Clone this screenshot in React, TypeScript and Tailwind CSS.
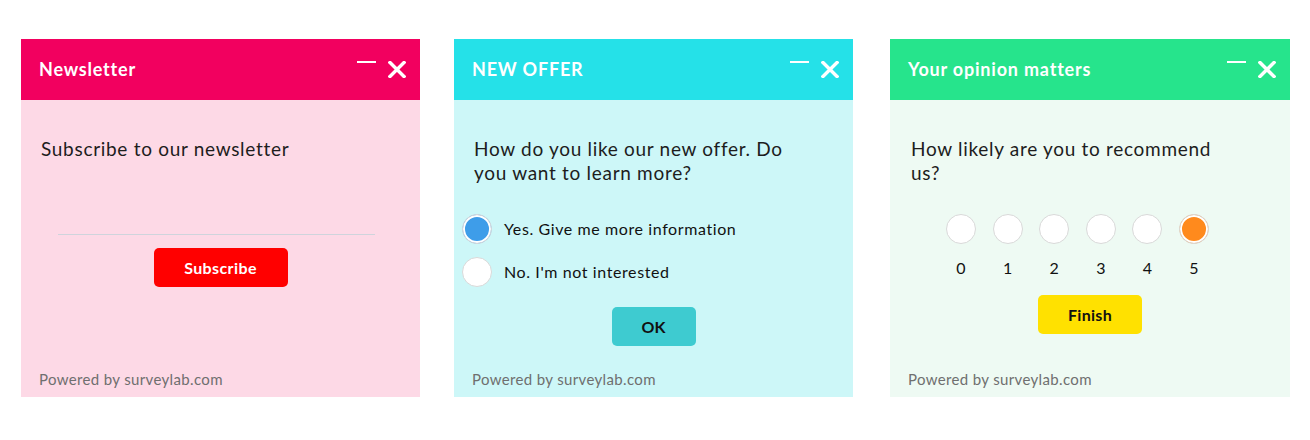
import { useState } from 'react';

const FONT = { fontFamily: 'Lato, "Open Sans", "Noto Sans", sans-serif' };

function WindowControls() {
  return (
    <div className="flex items-start gap-[12px]">
      <div className="w-[19px] h-[2px] bg-white" />
      <svg width="18" height="17" viewBox="0 0 18 17" className="block">
        <path d="M2 1.5 L16 15.5 M16 1.5 L2 15.5" stroke="white" strokeWidth="3.4" strokeLinecap="square" />
      </svg>
    </div>
  );
}

function Header({ title, color }: { title: string; color: string }) {
  return (
    <div className={`h-[61px] flex items-center justify-between pl-[18px] pr-[14px] ${color}`}>
      <h2 className="text-white text-[18px] font-bold tracking-[0.8px]">{title}</h2>
      <WindowControls />
    </div>
  );
}

function Footer() {
  return <div className="mt-auto pb-[7px] pl-[18px] text-[15px] tracking-[0.35px] text-[#6f6f6f]">Powered by surveylab.com</div>;
}

function NewsletterCard() {
  return (
    <div className="w-[399px] h-[358px] flex flex-col bg-[#fdd9e6]">
      <Header title="Newsletter" color="bg-[#f2005f]" />
      <div className="pt-[37px] pl-[20px] text-[19px] leading-[24px] tracking-[0.7px] text-[#1d1d1d]">Subscribe to our newsletter</div>
      <div className="mt-[73px] ml-[37px] w-[317px] h-px bg-[#cfd4dc]" />
      <div className="flex justify-center mt-[13px]">
        <button className="w-[134px] h-[39px] rounded-[5px] bg-[#ff0000] text-white text-[16px] font-bold tracking-[0.4px]">Subscribe</button>
      </div>
      <Footer />
    </div>
  );
}

function OfferCard() {
  const [choice, setChoice] = useState(0);
  const options = ['Yes. Give me more information', "No. I'm not interested"];
  return (
    <div className="w-[399px] h-[358px] flex flex-col bg-[#cdf7f8]">
      <Header title="NEW OFFER" color="bg-[#25e1e8]" />
      <div className="pt-[37px] pl-[20px] text-[19px] leading-[24px] tracking-[0.7px] text-[#1d1d1d]">
        How do you like our new offer. Do<br />you want to learn more?
      </div>
      <div className="mt-[29px] flex flex-col gap-[13px] pl-[8px]">
        {options.map((o, i) => (
          <label key={o} className="flex items-center gap-[12px] cursor-pointer" onClick={() => setChoice(i)}>
            <span
              className={`w-[30px] h-[30px] rounded-full border border-[#d9d9d9] ${
                choice === i ? 'bg-[#3e9de9] shadow-[inset_0_0_0_2px_#ffffff]' : 'bg-white'
              }`}
            />
            <span className="text-[16px] tracking-[0.6px] text-[#111]">{o}</span>
          </label>
        ))}
      </div>
      <div className="flex justify-center mt-[20px]">
        <button className="w-[84px] h-[39px] rounded-[5px] bg-[#3ecbd0] text-[#111] text-[16px] font-bold">OK</button>
      </div>
      <Footer />
    </div>
  );
}

function OpinionCard() {
  const [score, setScore] = useState(5);
  return (
    <div className="w-[400px] h-[358px] flex flex-col bg-[#eefaf3]">
      <Header title="Your opinion matters" color="bg-[#26e48c]" />
      <div className="pt-[37px] pl-[21px] text-[19px] leading-[24px] tracking-[0.7px] text-[#1d1d1d]">
        How likely are you to recommend<br />us?
      </div>
      <div className="mt-[29px] ml-[56px] flex gap-[16.6px]">
        {[0, 1, 2, 3, 4, 5].map(n => (
          <div key={n} className="flex flex-col items-center gap-[14px] cursor-pointer" onClick={() => setScore(n)}>
            <span
              className={`w-[30px] h-[30px] rounded-full border border-[#d9d9d9] ${
                score === n ? 'bg-[#ff8a1d] shadow-[inset_0_0_0_2px_#ffffff]' : 'bg-white'
              }`}
            />
            <span className="text-[16px] leading-[20px] text-[#111]">{n}</span>
          </div>
        ))}
      </div>
      <div className="flex justify-center mt-[17px]">
        <button className="w-[104px] h-[39px] rounded-[5px] bg-[#ffe100] text-[#111] text-[16px] font-bold tracking-[0.3px]">Finish</button>
      </div>
      <Footer />
    </div>
  );
}

export default function App() {
  return (
    <div className="w-[1310px] h-[440px] bg-white pt-[39px] pl-[21px] flex items-start" style={FONT}>
      <NewsletterCard />
      <div className="ml-[34px]"><OfferCard /></div>
      <div className="ml-[37px]"><OpinionCard /></div>
    </div>
  );
}
